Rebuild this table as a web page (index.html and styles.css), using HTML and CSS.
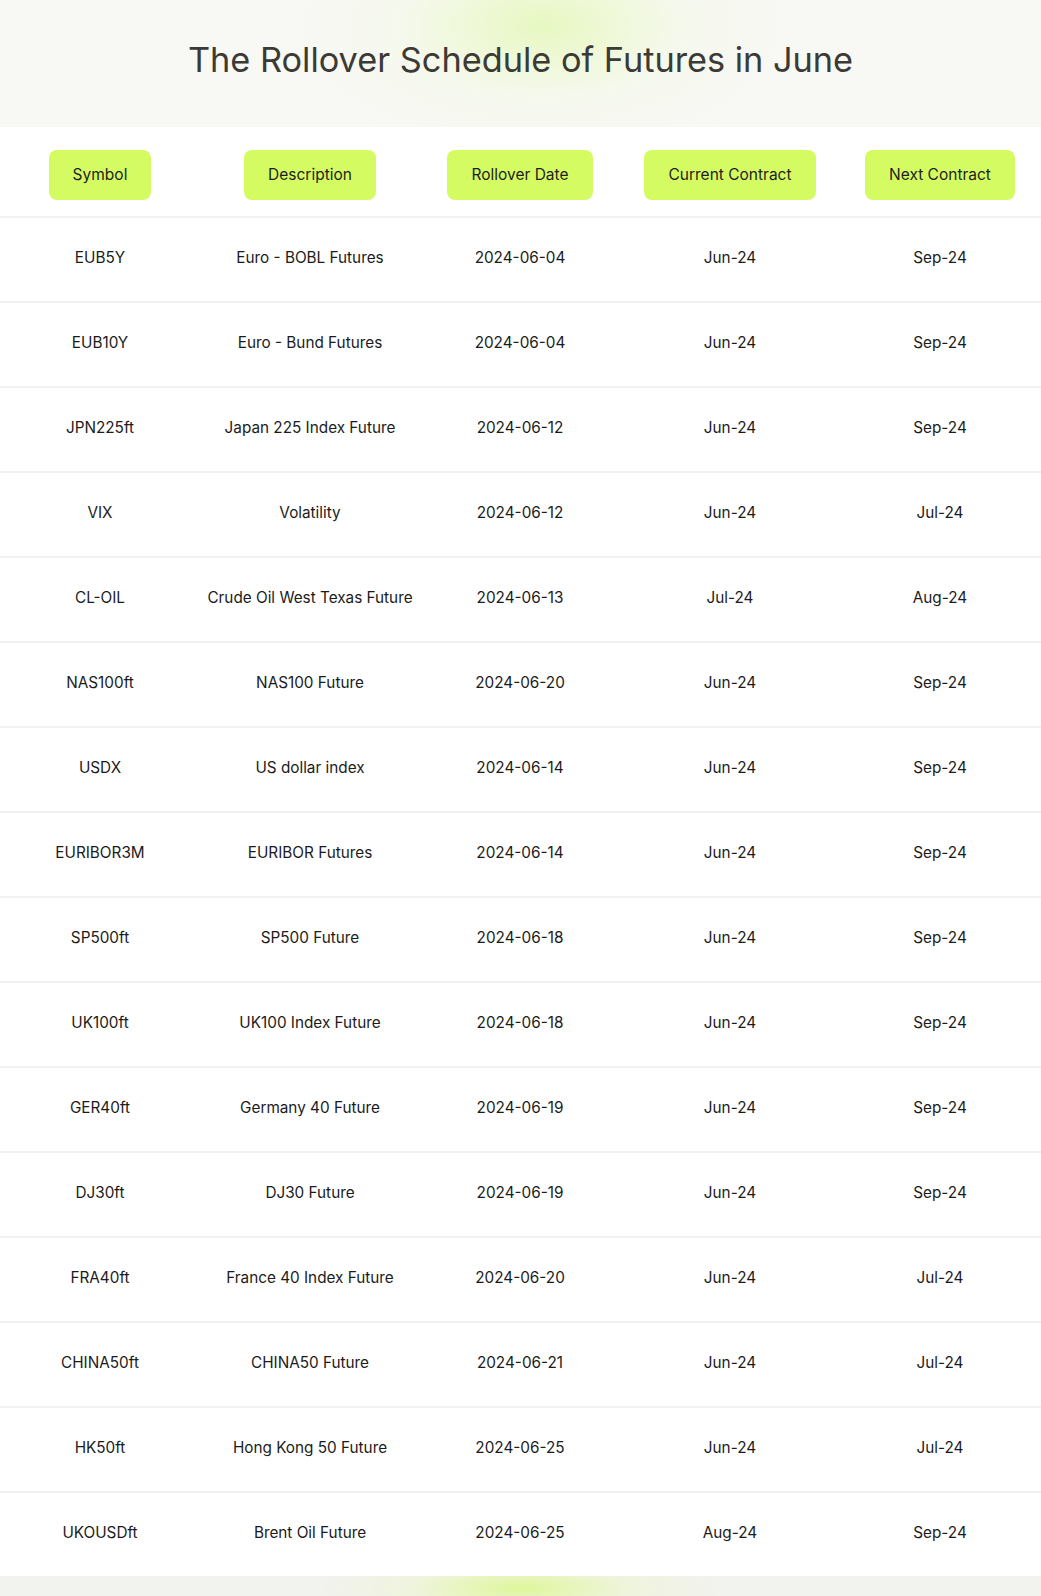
FILE: index.html
```html
<!DOCTYPE html>
<html lang="en">
<head>
<meta charset="utf-8">
<title>The Rollover Schedule of Futures in June</title>
<link rel="stylesheet" href="styles.css">
</head>
<body>
<header class="hero">
  <h1 class="title">The Rollover Schedule of Futures in June</h1>
</header>
<main class="table-wrap">
  <div class="table">
    <div class="row head">
      <div class="cell"><span class="pill">Symbol</span></div>
      <div class="cell"><span class="pill">Description</span></div>
      <div class="cell"><span class="pill">Rollover Date</span></div>
      <div class="cell"><span class="pill">Current Contract</span></div>
      <div class="cell"><span class="pill">Next Contract</span></div>
    </div>
    <div class="row"><div class="cell">EUB5Y</div><div class="cell">Euro - BOBL Futures</div><div class="cell">2024-06-04</div><div class="cell">Jun-24</div><div class="cell">Sep-24</div></div>
    <div class="row"><div class="cell">EUB10Y</div><div class="cell">Euro - Bund Futures</div><div class="cell">2024-06-04</div><div class="cell">Jun-24</div><div class="cell">Sep-24</div></div>
    <div class="row"><div class="cell">JPN225ft</div><div class="cell">Japan 225 Index Future</div><div class="cell">2024-06-12</div><div class="cell">Jun-24</div><div class="cell">Sep-24</div></div>
    <div class="row"><div class="cell">VIX</div><div class="cell">Volatility</div><div class="cell">2024-06-12</div><div class="cell">Jun-24</div><div class="cell">Jul-24</div></div>
    <div class="row"><div class="cell">CL-OIL</div><div class="cell">Crude Oil West Texas Future</div><div class="cell">2024-06-13</div><div class="cell">Jul-24</div><div class="cell">Aug-24</div></div>
    <div class="row"><div class="cell">NAS100ft</div><div class="cell">NAS100 Future</div><div class="cell">2024-06-20</div><div class="cell">Jun-24</div><div class="cell">Sep-24</div></div>
    <div class="row"><div class="cell">USDX</div><div class="cell">US dollar index</div><div class="cell">2024-06-14</div><div class="cell">Jun-24</div><div class="cell">Sep-24</div></div>
    <div class="row"><div class="cell">EURIBOR3M</div><div class="cell">EURIBOR Futures</div><div class="cell">2024-06-14</div><div class="cell">Jun-24</div><div class="cell">Sep-24</div></div>
    <div class="row"><div class="cell">SP500ft</div><div class="cell">SP500 Future</div><div class="cell">2024-06-18</div><div class="cell">Jun-24</div><div class="cell">Sep-24</div></div>
    <div class="row"><div class="cell">UK100ft</div><div class="cell">UK100 Index Future</div><div class="cell">2024-06-18</div><div class="cell">Jun-24</div><div class="cell">Sep-24</div></div>
    <div class="row"><div class="cell">GER40ft</div><div class="cell">Germany 40 Future</div><div class="cell">2024-06-19</div><div class="cell">Jun-24</div><div class="cell">Sep-24</div></div>
    <div class="row"><div class="cell">DJ30ft</div><div class="cell">DJ30 Future</div><div class="cell">2024-06-19</div><div class="cell">Jun-24</div><div class="cell">Sep-24</div></div>
    <div class="row"><div class="cell">FRA40ft</div><div class="cell">France 40 Index Future</div><div class="cell">2024-06-20</div><div class="cell">Jun-24</div><div class="cell">Jul-24</div></div>
    <div class="row"><div class="cell">CHINA50ft</div><div class="cell">CHINA50 Future</div><div class="cell">2024-06-21</div><div class="cell">Jun-24</div><div class="cell">Jul-24</div></div>
    <div class="row"><div class="cell">HK50ft</div><div class="cell">Hong Kong 50 Future</div><div class="cell">2024-06-25</div><div class="cell">Jun-24</div><div class="cell">Jul-24</div></div>
    <div class="row"><div class="cell">UKOUSDft</div><div class="cell">Brent Oil Future</div><div class="cell">2024-06-25</div><div class="cell">Aug-24</div><div class="cell">Sep-24</div></div>
  </div>
</main>
<footer class="band"></footer>
</body>
</html>
```

FILE: styles.css
```css
* { box-sizing: border-box; }
html, body { margin: 0; padding: 0; }
body {
  font-family: Inter, "Noto Sans", "Liberation Sans", sans-serif;
  color: #1b1b1b;
  background: #ffffff;
  overflow-x: hidden;
}
.hero {
  height: 127px;
  display: flex;
  align-items: center;
  justify-content: center;
  background:
    radial-gradient(ellipse 260px 130px at 52% 20%, rgba(226, 248, 176, 0.75), rgba(240, 250, 220, 0.3) 55%, rgba(248, 248, 245, 0) 100%),
    #f8f8f5;
}
.title {
  margin: 0;
  font-size: 34.3px;
  font-weight: 400;
  color: #3b3a35;
  letter-spacing: 0;
  padding-bottom: 8px;
}
.table-wrap { overflow: hidden; }
.table { width: 1050px; margin-left: -5px; }
.row {
  display: grid;
  grid-template-columns: repeat(5, 210px);
  height: 85px;
  border-top: 2px solid #f1f1f1;
  align-items: center;
  font-size: 15.3px;
  padding-bottom: 4px;
}
.row.head {
  height: 89px;
  border-top: none;
  align-items: start;
  padding-top: 23px;
  padding-bottom: 0;
  font-size: 15.5px;
}
.cell { text-align: center; white-space: nowrap; }
.pill {
  display: inline-flex;
  align-items: center;
  height: 50px;
  padding: 0 24px 1px;
  background: #d5fb63;
  border-radius: 8px;
  color: #1e1e1e;
}
.band {
  height: 20px;
  background:
    radial-gradient(ellipse 200px 40px at 50% 60%, rgba(222, 247, 150, 0.95), rgba(236, 246, 205, 0.5) 55%, rgba(242, 242, 238, 0) 100%),
    #f2f2ee;
}
```
